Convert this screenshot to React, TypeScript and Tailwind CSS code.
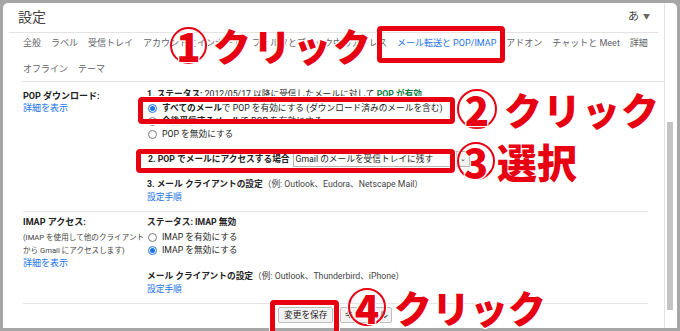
import React from 'react'

// Gmail 設定 > メール転送と POP/IMAP のスクリーンショット(注釈つき)

const FONT = "font-['Roboto','Noto_Sans_CJK_JP',sans-serif]"
const MARK = "font-['Noto_Sans_CJK_JP',sans-serif] font-black text-[#e60012] leading-none [text-shadow:1px_1px_0_#fff,-1px_-1px_0_#fff,1px_-1px_0_#fff,-1px_1px_0_#fff,0_0_3px_#fff]"

const TABS_1 = [
  '全般',
  'ラベル',
  '受信トレイ',
  'アカウントとインポート',
  'フィルタとブロック中のアドレス',
  'メール転送と POP/IMAP',
  'アドオン',
  'チャットと Meet',
  '詳細',
]
const TABS_2 = ['オフライン', 'テーマ']

function Radio({ checked }: { checked?: boolean }) {
  if (checked) {
    return (
      <span className="ml-[1px] flex h-[9px] w-[9px] shrink-0 items-center justify-center rounded-full border border-[#1a73e8]">
        <span className="h-[5px] w-[5px] rounded-full bg-[#1a73e8]" />
      </span>
    )
  }
  return <span className="ml-[1px] h-[9px] w-[9px] shrink-0 rounded-full border border-[#7a7a7a]" />
}

function RadioRow({ checked, children }: { checked?: boolean; children: React.ReactNode }) {
  return (
    <div className="flex h-[13px] items-center gap-[5px] whitespace-nowrap">
      <Radio checked={checked} />
      <span>{children}</span>
    </div>
  )
}

function Box({ className }: { className: string }) {
  return (
    <div
      className={`absolute rounded-[4px] border-[5px] border-[#e60012] shadow-[0_0_0_1px_#fff] ${className}`}
    />
  )
}

function Circled({ n, size }: { n: string; size: string }) {
  return (
    <span
      className={`flex shrink-0 items-center justify-center rounded-full border-2 border-[#e60012] shadow-[0_0_0_1px_#fff] ${size}`}
    >
      <span className={`${MARK} text-[40px]`}>{n}</span>
    </span>
  )
}

export default function App() {
  return (
    <div className={`relative h-[331px] w-[680px] overflow-hidden bg-[#a6a6a6] p-[3px] text-[8.7px] text-[#222] ${FONT}`}>
      <div className="flex h-full rounded-t-[5px] bg-white">
        <div className="min-w-0 flex-1">
          {/* header */}
          <div className="mx-[6px] flex h-[30px] items-center justify-between border-b border-[#e3e3e3] pl-[9px] pr-[8px]">
            <span className="text-[14px] text-[#444]">設定</span>
            <span className="flex items-center gap-[4px] text-[11px] text-[#444]">
              あ<span className="text-[7px] text-[#666]">▼</span>
            </span>
          </div>

          {/* tabs */}
          <div className="ml-[19px] border-b border-[#e3e3e3] pl-[1px] text-[9px] text-[#5f6368]">
            <div className="flex h-[22px] items-center gap-[10px] whitespace-nowrap">
              {TABS_1.map((t) => (
                <span key={t} className={t.startsWith('メール転送') ? 'text-[#1a73e8]' : ''}>
                  {t}
                </span>
              ))}
            </div>
            <div className="mt-[4px] flex h-[22px] items-center gap-[10px]">
              {TABS_2.map((t) => (
                <span key={t}>{t}</span>
              ))}
            </div>
          </div>

          <div className="ml-[20px] w-[625px]">
            {/* POP */}
            <div className="flex border-b border-[#e5e5e5] pb-[7px]">
              <div className="w-[124px] shrink-0 pt-[8px] text-[9px] leading-[12px]">
                <div className="font-bold">POP ダウンロード:</div>
                <div className="text-[#1a73e8]">詳細を表示</div>
              </div>
              <div className="pt-[6px] leading-[13px]">
                <div className="h-[13px] whitespace-nowrap">
                  <b>1. ステータス: </b>2012/05/17 以降に受信したメールに対して{' '}
                  <b className="text-[#0b8043]">POP が有効</b>
                </div>
                <div className="mt-[1px]">
                  <RadioRow checked>
                    <b>すべてのメール</b>で POP を有効にする (ダウンロード済みのメールを含む)
                  </RadioRow>
                  <RadioRow>
                    <b>今後受信するメール</b>で POP を有効にする
                  </RadioRow>
                  <RadioRow>POP を無効にする</RadioRow>
                </div>
                <div className="mt-[9px] flex h-[18px] items-center whitespace-nowrap">
                  <b className="pl-[1px] pr-[3px]">2. POP でメールにアクセスする場合</b>
                  <div className="flex h-[16px] w-[177px] items-center justify-between border border-[#b5b5b5]">
                    <span className="pl-[2px]">Gmail のメールを受信トレイに残す</span>
                    <span className="flex h-full w-[13px] items-center justify-center border-l border-[#c8c8c8] bg-[#f2f2f2] text-[7px] text-[#444]">
                      ⌄
                    </span>
                  </div>
                </div>
                <div className="mt-[10px] whitespace-nowrap">
                  <b>3. メール クライアントの設定</b>
                  <span className="text-[#444]">（例: Outlook、Eudora、Netscape Mail）</span>
                </div>
                <div className="text-[#1a73e8]">設定手順</div>
              </div>
            </div>

            {/* IMAP */}
            <div className="flex border-b border-[#e5e5e5] pb-[7px]">
              <div className="w-[124px] shrink-0 pt-[4px]">
                <div className="h-[12px] text-[9px] font-bold leading-[12px]">IMAP アクセス:</div>
                <div className="mt-[3px] whitespace-nowrap text-[7.6px] leading-[13px] text-[#444]">
                  <div>(IMAP を使用して他のクライアント</div>
                  <div>から Gmail にアクセスします)</div>
                </div>
                <div className="text-[9px] leading-[13px] text-[#1a73e8]">詳細を表示</div>
              </div>
              <div className="pt-[4px] leading-[13px]">
                <div className="h-[12px] font-bold leading-[12px]">ステータス: IMAP 無効</div>
                <div className="mt-[3px]">
                  <RadioRow>IMAP を有効にする</RadioRow>
                  <RadioRow checked>IMAP を無効にする</RadioRow>
                </div>
                <div className="mt-[13px] whitespace-nowrap">
                  <b>メール クライアントの設定</b>
                  <span className="text-[#444]">（例: Outlook、Thunderbird、iPhone）</span>
                </div>
                <div className="text-[#1a73e8]">設定手順</div>
              </div>
            </div>

            {/* buttons */}
            <div className="flex gap-[7px] pl-[255px] pt-[3px]">
              <button className="h-[16px] rounded-[2px] border border-[#bdbdbd] bg-[#f3f3f3] px-[5px] leading-[14px] text-[#222]">
                変更を保存
              </button>
              <button className="h-[16px] rounded-[2px] border border-[#bdbdbd] bg-[#f3f3f3] px-[3px] leading-[14px] text-[#222]">
                キャンセル
              </button>
            </div>
          </div>
        </div>

        {/* scrollbar */}
        <div className="w-[13px] shrink-0 border-l border-[#e3e3e3] pt-[119px]">
          <div className="ml-[2px] h-[188px] w-[6px] bg-[#c4c4c4]" />
        </div>
      </div>

      {/* annotations */}
      <Box className="left-[377px] top-[26px] h-[37px] w-[128px]" />
      <Box className="left-[138px] top-[97px] h-[27px] w-[317px]" />
      <Box className="left-[136px] top-[149px] h-[24px] w-[319px]" />
      <Box className="left-[270px] top-[300px] h-[40px] w-[69px]" />

      <div className="absolute left-[170px] top-[26px] flex items-center gap-[6px]">
        <Circled n="1" size="h-[37px] w-[37px]" />
        <span className={`${MARK} text-[38px] tracking-[2px]`}>クリック</span>
      </div>
      <div className="absolute left-[457px] top-[89px] flex items-center gap-[7px]">
        <Circled n="2" size="h-[40px] w-[40px]" />
        <span className={`${MARK} text-[38px] tracking-[1px]`}>クリック</span>
      </div>
      <div className="absolute left-[457px] top-[141px] flex items-center gap-[2px]">
        <Circled n="3" size="h-[38px] w-[38px]" />
        <span className={`${MARK} text-[40px]`}>選択</span>
      </div>
      <div className="absolute left-[348px] top-[288px] flex items-center gap-[8px]">
        <Circled n="4" size="h-[38px] w-[38px]" />
        <span className={`${MARK} text-[38px]`}>クリック</span>
      </div>
    </div>
  )
}
